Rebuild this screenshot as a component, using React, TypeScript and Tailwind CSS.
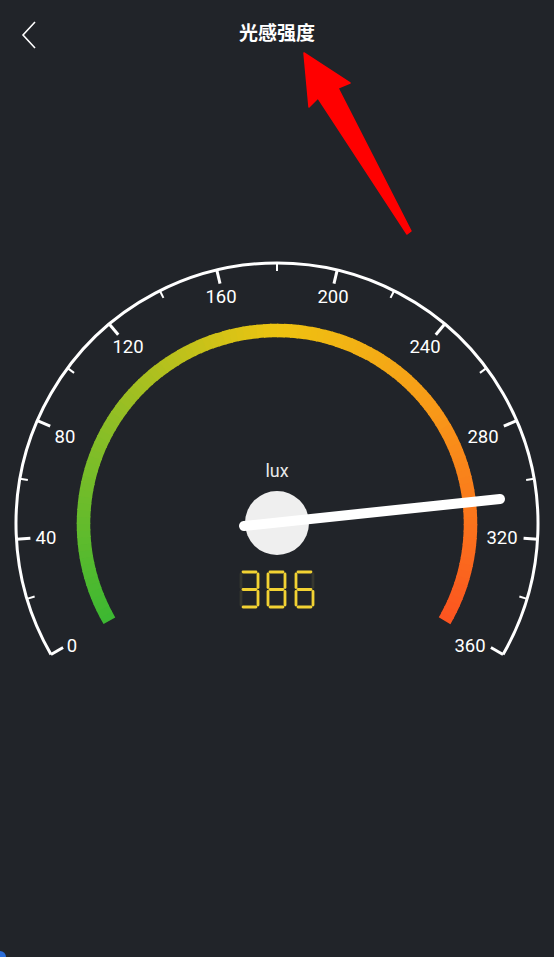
import React from "react";

const CX = 277;
const CY = 524;
const R_OUT = 261;
const R_BAND = 193.5;

// value (0..360) -> angle in degrees, measured clockwise from the top
const angleOf = (v: number) => (v / 360) * 240 - 120;

const polar = (r: number, deg: number) => {
  const a = (deg * Math.PI) / 180;
  return { x: CX + r * Math.sin(a), y: CY - r * Math.cos(a) };
};

const arcPath = (r: number, from: number, to: number) => {
  const p1 = polar(r, from);
  const p2 = polar(r, to);
  const large = to - from > 180 ? 1 : 0;
  return `M ${p1.x} ${p1.y} A ${r} ${r} 0 ${large} 1 ${p2.x} ${p2.y}`;
};

const STOPS: [number, [number, number, number]][] = [
  [0, [60, 184, 50]],
  [0.25, [140, 190, 38]],
  [0.5, [238, 196, 17]],
  [0.72, [248, 154, 24]],
  [1, [252, 84, 32]],
];

const colorAt = (t: number) => {
  for (let i = 0; i < STOPS.length - 1; i++) {
    const [t0, c0] = STOPS[i];
    const [t1, c1] = STOPS[i + 1];
    if (t >= t0 && t <= t1) {
      const k = (t - t0) / (t1 - t0);
      const c = c0.map((v, j) => Math.round(v + (c1[j] - v) * k));
      return `rgb(${c[0]},${c[1]},${c[2]})`;
    }
  }
  return "rgb(252,84,32)";
};

const LABELS = [
  { v: 0, x: 72, y: 646 },
  { v: 40, x: 46, y: 538 },
  { v: 80, x: 65, y: 437 },
  { v: 120, x: 128, y: 347 },
  { v: 160, x: 221, y: 297 },
  { v: 200, x: 333, y: 297 },
  { v: 240, x: 425, y: 347 },
  { v: 280, x: 483, y: 437 },
  { v: 320, x: 502, y: 538 },
  { v: 360, x: 470, y: 646 },
];

// segments a b c d e f g
const DIGITS: Record<string, boolean[]> = {
  "3": [true, true, true, true, false, false, true],
  "8": [true, true, true, true, true, true, true],
  "6": [true, false, true, true, true, true, true],
};

function SegDigit({ ch, x, y }: { ch: string; x: number; y: number }) {
  const w = 17;
  const h = 35;
  const m = h / 2;
  const g = 2;
  const segs = [
    [x + g, y, x + w - g, y],
    [x + w, y + g, x + w, y + m - g],
    [x + w, y + m + g, x + w, y + h - g],
    [x + g, y + h, x + w - g, y + h],
    [x, y + m + g, x, y + h - g],
    [x, y + g, x, y + m - g],
    [x + g, y + m, x + w - g, y + m],
  ];
  const on = DIGITS[ch];
  return (
    <g strokeWidth={2.8} strokeLinecap="round">
      {segs.map((s, i) => (
        <line
          key={i}
          x1={s[0]}
          y1={s[1]}
          x2={s[2]}
          y2={s[3]}
          stroke={on[i] ? "#f2d233" : "#36372f"}
        />
      ))}
    </g>
  );
}

function Gauge() {
  const N = 120;
  const band = Array.from({ length: N }, (_, i) => {
    const a0 = -120 + (240 * i) / N;
    const a1 = -120 + (240 * (i + 1)) / N + (i < N - 1 ? 0.4 : 0);
    return { d: arcPath(R_BAND, a0, a1), c: colorAt((i + 0.5) / N) };
  });

  const ticks = Array.from({ length: 19 }, (_, i) => {
    const v = i * 20;
    const major = i % 2 === 0;
    const a = angleOf(v);
    const p1 = polar(R_OUT, a);
    const p2 = polar(R_OUT - (major ? 14 : 8), a);
    return { p1, p2, major, v };
  });

  return (
    <svg width="554" height="620" viewBox="0 66 554 620" className="block">
      <path d={arcPath(R_OUT, -120, 120)} fill="none" stroke="#fff" strokeWidth={3} />
      {ticks.map((t) => (
        <line
          key={t.v}
          x1={t.p1.x}
          y1={t.p1.y}
          x2={t.p2.x}
          y2={t.p2.y}
          stroke="#fff"
          strokeWidth={t.major ? 3 : 2}
        />
      ))}
      {LABELS.map((l) => (
        <text
          key={l.v}
          x={l.x}
          y={l.y}
          textAnchor="middle"
          dominantBaseline="central"
          fill="#fff"
          fontSize={18.5}
          fontFamily="Roboto, 'Liberation Sans', sans-serif"
        >
          {l.v}
        </text>
      ))}
      {band.map((b, i) => (
        <path key={i} d={b.d} fill="none" stroke={b.c} strokeWidth={13.5} />
      ))}
      <text
        x={277}
        y={470}
        textAnchor="middle"
        dominantBaseline="central"
        fill="#e8e8e8"
        fontSize={18}
        fontFamily="Roboto, 'Liberation Sans', sans-serif"
      >
        lux
      </text>
      <circle cx={277} cy={523} r={32} fill="#efefef" />
      <line x1={244} y1={526} x2={500} y2={499} stroke="#fff" strokeWidth={10} strokeLinecap="round" />
      <SegDigit ch="3" x={241} y={572} />
      <SegDigit ch="8" x={268} y={572} />
      <SegDigit ch="6" x={296} y={572} />
    </svg>
  );
}

export default function App() {
  return (
    <div className="relative h-[957px] w-full overflow-hidden bg-[#212429]">
      <header className="relative flex h-[66px] items-center justify-center">
        <button className="absolute left-[16px] top-[14px] p-1">
          <svg width="18" height="32" viewBox="0 0 18 32">
            <polyline points="15,4 3,17 15,30" fill="none" stroke="#fff" strokeWidth={1.6} />
          </svg>
        </button>
        <h1 className="-mt-[1px] text-[19px] font-bold text-white [font-family:'Noto_Sans_CJK_SC',sans-serif]">
          光感强度
        </h1>
      </header>

      <Gauge />

      {/* annotation arrow */}
      <svg className="pointer-events-none absolute left-0 top-0" width="554" height="260">
        <polygon
          points="304,53 350,83 338,88 411,231 407,234 318,98 309,107"
          fill="#ff0000"
          stroke="#ff0000"
          strokeWidth={1.5}
          strokeLinejoin="round"
        />
      </svg>

      <div className="absolute bottom-0 left-0 h-[6px] w-[6px] rounded-tr-full bg-[#2a6cd8]" />
    </div>
  );
}
